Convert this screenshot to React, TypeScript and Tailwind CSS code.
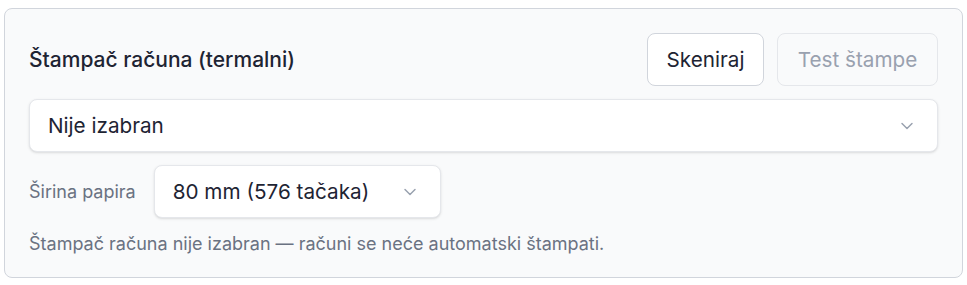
import { ChevronDown } from 'lucide-react';

export default function App() {
    return (
        <div className="min-h-screen bg-white p-1 pt-2 font-['Inter',sans-serif]">
            <div className="w-[959px] h-[270px] rounded-lg border border-gray-300 bg-[#f9fafb] px-[24px] pt-[24px]">
                {/* Header */}
                <div className="flex items-center justify-between">
                    <h2 className="text-[21px] font-medium text-[#1e2433]">Štampač računa (termalni)</h2>
                    <div className="flex gap-[13px]">
                        <button className="h-[53px] w-[117px] rounded-lg border border-gray-300 bg-white text-[20.7px] text-[#1e2433]">
                            Skeniraj
                        </button>
                        <button
                            disabled
                            className="h-[53px] w-[161px] rounded-lg border border-gray-200 bg-[#f9fafb] text-[20.7px] text-gray-400"
                        >
                            Test štampe
                        </button>
                    </div>
                </div>

                {/* Printer select */}
                <div className="mt-[13px] flex h-[53px] items-center justify-between rounded-lg border border-gray-200 bg-white pl-[18px] pr-[20px] shadow-sm">
                    <span className="text-[20.7px] text-[#1e2433]">Nije izabran</span>
                    <ChevronDown className="h-5 w-5 text-gray-400" strokeWidth={1.75} />
                </div>

                {/* Paper width */}
                <div className="mt-[13px] flex items-center gap-[18px]">
                    <span className="text-[18px] text-gray-500">Širina papira</span>
                    <div className="flex h-[53px] w-[287px] items-center justify-between rounded-lg border border-gray-200 bg-white pl-[18px] pr-[20px] shadow-sm">
                        <span className="text-[20.7px] text-[#1e2433]">80 mm (576 tačaka)</span>
                        <ChevronDown className="h-5 w-5 text-gray-400" strokeWidth={1.75} />
                    </div>
                </div>

                <p className="mt-[12px] text-[18px] text-gray-500">
                    Štampač računa nije izabran — računi se neće automatski štampati.
                </p>
            </div>
        </div>
    );
}
